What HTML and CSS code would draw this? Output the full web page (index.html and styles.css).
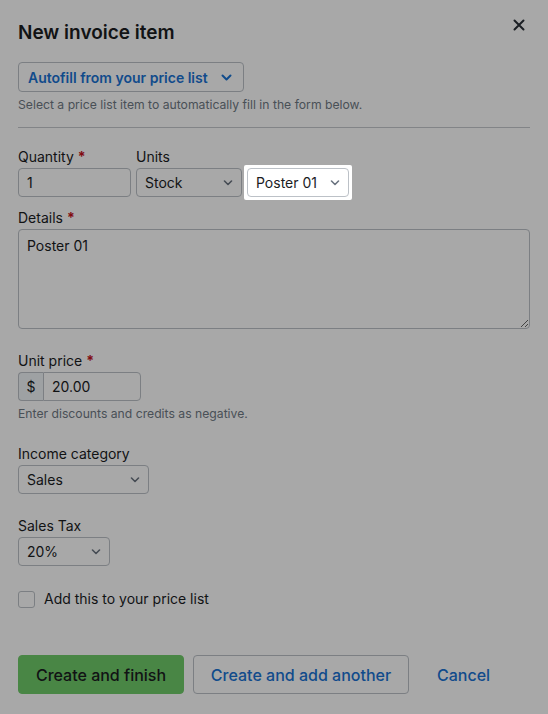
FILE: index.html
```html
<!DOCTYPE html>
<html lang="en">
<head>
    <meta charset="UTF-8">
    <meta name="viewport" content="width=device-width, initial-scale=1.0">
    <title>New invoice item</title>
    <link rel="stylesheet" href="styles.css">
</head>
<body>
    <div class="modal">
        <div class="modal-header">
            <h1>New invoice item</h1>
            <button class="close" aria-label="Close">
                <svg width="12" height="12" viewBox="0 0 12 12"><path d="M1.5 1.5l9 9M10.5 1.5l-9 9" stroke="currentColor" stroke-width="2" stroke-linecap="round"/></svg>
            </button>
        </div>

        <button class="autofill">
            Autofill from your price list
            <svg width="11" height="7" viewBox="0 0 11 7"><path d="M1.5 1.5l4 4 4-4" fill="none" stroke="currentColor" stroke-width="2" stroke-linecap="round" stroke-linejoin="round"/></svg>
        </button>
        <p class="hint">Select a price list item to automatically fill in the form below.</p>

        <hr>

        <div class="row">
            <div class="col">
                <label class="label">Quantity <span class="req">*</span></label>
                <input class="input qty" value="1">
            </div>
            <div class="col">
                <label class="label">Units</label>
                <div class="select units"><span>Stock</span>
                    <svg width="10" height="6" viewBox="0 0 10 6"><path d="M1.5 1l3.5 3.5L8.5 1" fill="none" stroke="currentColor" stroke-width="1.6" stroke-linecap="round" stroke-linejoin="round"/></svg>
                </div>
            </div>
            <div class="spotlight">
                <div class="select poster"><span>Poster 01</span>
                    <svg width="10" height="6" viewBox="0 0 10 6"><path d="M1.5 1l3.5 3.5L8.5 1" fill="none" stroke="currentColor" stroke-width="1.6" stroke-linecap="round" stroke-linejoin="round"/></svg>
                </div>
            </div>
        </div>

        <div class="field details">
            <label class="label">Details <span class="req">*</span></label>
            <textarea class="textarea">Poster 01</textarea>
        </div>

        <div class="field">
            <label class="label">Unit price <span class="req">*</span></label>
            <div class="input-group">
                <span class="addon">$</span>
                <input class="input price" value="20.00">
            </div>
            <p class="hint">Enter discounts and credits as negative.</p>
        </div>

        <div class="field">
            <label class="label">Income category</label>
            <div class="select income"><span>Sales</span>
                <svg width="10" height="6" viewBox="0 0 10 6"><path d="M1.5 1l3.5 3.5L8.5 1" fill="none" stroke="currentColor" stroke-width="1.6" stroke-linecap="round" stroke-linejoin="round"/></svg>
            </div>
        </div>

        <div class="field">
            <label class="label">Sales Tax</label>
            <div class="select tax"><span>20%</span>
                <svg width="10" height="6" viewBox="0 0 10 6"><path d="M1.5 1l3.5 3.5L8.5 1" fill="none" stroke="currentColor" stroke-width="1.6" stroke-linecap="round" stroke-linejoin="round"/></svg>
            </div>
        </div>

        <label class="check">
            <span class="box"></span>
            Add this to your price list
        </label>

        <div class="actions">
            <button class="btn btn-primary">Create and finish</button>
            <button class="btn btn-outline">Create and add another</button>
            <button class="btn btn-link">Cancel</button>
        </div>
    </div>
</body>
</html>
```

FILE: styles.css
```css
body {
    margin: 0;
    background: #fff;
    font-family: Inter, Lato, sans-serif;
    color: #1b1d1f;
}
.modal {
    padding: 21px 18px 20px 18px;
}
.modal-header {
    display: flex;
    justify-content: space-between;
    align-items: flex-start;
}
.modal-header h1 {
    margin: 0;
    font-size: 19px;
    line-height: 24px;
    font-weight: 600;
}
.close {
    border: 0;
    background: none;
    padding: 0;
    margin: -2px 5px 0 0;
    color: #2a3038;
    width: 12px;
    height: 12px;
    display: flex;
}
button {
    font-family: inherit;
}
.autofill {
    margin-top: 17px;
    height: 30px;
    display: flex;
    align-items: center;
    gap: 13px;
    padding: 0 11px 0 9px;
    background: #fff;
    border: 1px solid #bcc1c7;
    border-radius: 4px;
    color: #1a73d4;
    font-size: 14px;
    font-weight: 600;
}
.hint {
    margin: 5px 0 0;
    font-size: 12.2px;
    line-height: 16px;
    color: #707a84;
}
hr {
    margin: 14px 0 0;
    border: 0;
    border-top: 1px solid #c5c9cd;
}
.row {
    display: flex;
    align-items: flex-end;
    margin-top: 20px;
}
.col + .col {
    margin-left: 5px;
}
.label {
    display: block;
    font-size: 14px;
    line-height: 18px;
    margin-bottom: 2px;
}
.req {
    color: #c4121c;
    font-weight: 700;
}
.input, .select, .textarea {
    box-sizing: border-box;
    height: 29px;
    border: 1px solid #bcc1c7;
    border-radius: 4px;
    background: #fff;
    font-family: inherit;
    font-size: 14px;
    color: #1b1d1f;
    padding: 0 8px;
}
.input {
    display: block;
}
.qty {
    width: 113px;
}
.select {
    display: flex;
    align-items: center;
    justify-content: space-between;
    padding: 0 8px 0 8px;
}
.select svg {
    color: #6b7480;
}
.units {
    width: 106px;
}
.spotlight {
    position: relative;
    z-index: 2;
    margin: 0 0 -3px 2px;
    padding: 3px;
    background: #fff;
    border-radius: 2px;
    box-shadow: 0 0 0 9999px rgba(0, 0, 0, 0.34);
}
.poster {
    width: 102px;
}
.field {
    margin-top: 23px;
}
.details {
    margin-top: 12px;
}
.textarea {
    display: block;
    width: 100%;
    height: 100px;
    padding: 7px 8px;
    line-height: 18px;
    resize: vertical;
}
.input-group {
    display: flex;
    height: 29px;
}
.addon {
    box-sizing: border-box;
    width: 25px;
    display: flex;
    align-items: center;
    justify-content: center;
    border: 1px solid #bcc1c7;
    border-right: 0;
    border-radius: 4px 0 0 4px;
    background: #f0f4f8;
    font-size: 14px;
}
.price {
    width: 98px;
    border-radius: 0 4px 4px 0;
}
.income {
    width: 131px;
}
.tax {
    width: 92px;
}
.check {
    display: flex;
    align-items: center;
    gap: 9px;
    margin-top: 24px;
    font-size: 14px;
    line-height: 18px;
}
.box {
    box-sizing: border-box;
    width: 17px;
    height: 17px;
    border: 1px solid #bcc1c7;
    border-radius: 3px;
    background: #fff;
}
.actions {
    display: flex;
    align-items: center;
    margin-top: 47px;
}
.btn {
    height: 39px;
    border-radius: 4px;
    font-size: 16px;
    font-weight: 500;
    padding: 0 15px;
}
.btn-primary {
    background: #70cb6a;
    border: 1px solid #70cb6a;
    color: #1b1d1f;
    width: 166px;
}
.btn-outline {
    margin-left: 9px;
    background: #fff;
    border: 1px solid #bcc1c7;
    color: #1a73d4;
    width: 216px;
}
.btn-link {
    margin-left: 13px;
    background: none;
    border: 0;
    color: #1a73d4;
}
```
